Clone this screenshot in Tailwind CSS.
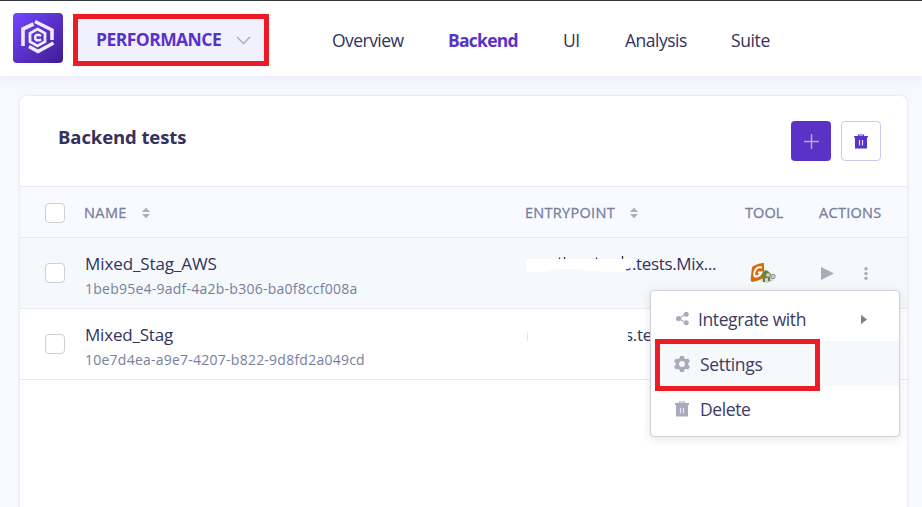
<!DOCTYPE html>
<html lang="en">
<head>
<meta charset="utf-8">
<title>Backend tests</title>
<script src="https://cdn.jsdelivr.net/npm/@tailwindcss/browser@4"></script>
</head>
<body class="h-[507px] w-[922px] overflow-hidden bg-[#f8f9ff] font-['Open_Sans','Noto_Sans',sans-serif] whitespace-nowrap text-[#32325d]">
<header class="flex h-[76px] items-start border-t border-[#343a40] bg-white pl-[13px] shadow-[0_2px_12px_rgba(80,80,200,0.10)]">
  <svg class="mt-3 h-[50px] w-[50px] shrink-0" viewBox="0 0 50 50">
    <defs><linearGradient id="lg" x1="0" y1="0" x2="1" y2="1"><stop offset="0" stop-color="#7546ff"/><stop offset="1" stop-color="#3e1c91"/></linearGradient></defs>
    <rect width="50" height="50" rx="4" fill="url(#lg)"/>
    <g fill="none" stroke="#f0ecff" stroke-width="3.600">
      <path d="M10 33V16L20.500 11"/><path d="M22 8.500L39 17V27"/><path d="M40.500 30L25 38.500L16 33.500"/>
      <path stroke-width="2.800" d="M24.500 16L32 20.300V28.700L24.500 33L17 28.700V20.300Z"/>
      <path stroke-width="2.500" d="M28 23L26.500 22H23.500L22.300 23.200V26L23.500 27.200H26.500L28 26.200"/>
    </g>
  </svg>
  <button class="mt-[13px] ml-[10px] flex h-[52px] w-[196px] shrink-0 items-center border-[5px] border-[#ed1c24] bg-[#f1f0ff] pl-[18px] text-[17.5px] font-bold text-[#5932c8]">
    <span class="-mt-px w-[140px] text-left tracking-[-0.55px]">PERFORMANCE</span>
    <svg class="h-[9px] w-[15px]" viewBox="0 0 15 9" fill="none" stroke="#a9a8bb" stroke-width="1.3"><path d="M1 1L7.500 7.500L14 1"/></svg>
  </button>
  <nav class="mt-[25px] ml-[63px] flex text-[17.500px] leading-7">
    <a class="w-[116px] tracking-[-0.55px]">Overview</a>
    <a class="w-[115px] font-bold tracking-[-0.75px] text-[#5932c8]">Backend</a>
    <a class="w-[62px] tracking-[-0.4px]">UI</a>
    <a class="w-[106px] tracking-[-0.5px]">Analysis</a>
    <a class="tracking-[-0.4px]">Suite</a>
  </nav>
</header>

<main class="mt-5 ml-5 h-[420px] w-[887px] rounded-t-md bg-white shadow-[0_0_3px_rgba(50,50,120,0.16)]">
  <div class="flex h-[90px] items-start justify-between pt-[25px] pr-[26px] pl-[38px]">
    <h1 class="mt-[2px] text-[18.500px] leading-7 font-bold tracking-[-0.1px]">Backend tests</h1>
    <div class="flex gap-[10px]">
      <button class="flex size-10 items-center justify-center rounded bg-[#5932c8]">
        <svg class="size-[15px]" viewBox="0 0 15 15" stroke="#b4adcf" stroke-width="1.500"><path d="M7.500 0V15M0 7.500H15"/></svg>
      </button>
      <button class="flex size-10 items-center justify-center rounded border border-[#d0c6f0]">
        <svg class="h-[15px] w-[14px]" viewBox="0 0 14 15" fill="none"><path d="M4.500 2.500V1H9.500V2.500" stroke="#5932c8" stroke-width="1.200"/><path d="M0 2H14V3.500H0ZM1 3H13V14.500H1Z" fill="#5932c8"/><path d="M5.500 6V11.500M8.500 6V11.500" stroke="#e4dff6" stroke-width="1.200"/></svg>
      </button>
    </div>
  </div>

  <div class="grid h-[52px] grid-cols-[64px_441px_220px_74px_1fr] items-center border-y border-[#e7eaf0] bg-[#f9faff] pt-px text-[14.500px] font-medium text-[#77809d] [-webkit-text-stroke:0.3px_#77809d]">
    <span class="ml-[25px] size-5 rounded border border-[#cbd1d6] bg-white"></span>
    <span class="flex items-center tracking-[0.4px]"><span class="w-[58px]">NAME</span>
      <svg class="h-3 w-[8px]" viewBox="0 0 9 12" fill="#a9afb5"><path d="M0 5L4.500 0L9 5ZM0 7H9L4.500 12Z"/></svg></span>
    <span class="flex items-center tracking-[0.3px]"><span class="w-[105px]">ENTRYPOINT</span>
      <svg class="h-3 w-[8px]" viewBox="0 0 9 12" fill="#a9afb5"><path d="M0 5L4.500 0L9 5ZM0 7H9L4.500 12Z"/></svg></span>
    <span class="tracking-[0.1px]">TOOL</span>
    <span class="tracking-[0.3px]">ACTIONS</span>
  </div>

  <div class="grid h-[71px] grid-cols-[65px_440px_224px_70px_1fr] border-b border-[#e7eaf0] bg-[#f5f9fc]">
    <span class="mt-[25px] ml-[25px] size-5 rounded border border-[#cbd1d6] bg-white"></span>
    <div class="pt-[14px]">
      <p class="text-[17px] leading-6 tracking-[-0.1px]">Mixed_Stag_AWS</p>
      <p class="mt-[2px] text-[14px] leading-[22px] tracking-[0.24px] text-[#77809d]">1beb95e4-9adf-4a2b-b306-ba0f8ccf008a</p>
    </div>
    <div class="relative pt-[14px] pl-[107px] text-[17px] leading-6 tracking-[-0.35px]">.tests.Mix...
      <svg class="absolute top-[18px] left-0 h-5 w-[110px]" viewBox="0 0 110 20"><path d="M1 3H107V6L100 16H85L65 15L52 13H32L20 16H1Z" fill="#fff"/><path d="M34.500 1.500V3M39.500 1V3M71.500 1.500V3M97.500 0V3" stroke="#32325d" stroke-width="1.300"/><path d="M101 13.500Q103 14.500 105.500 12.500" fill="none" stroke="#32325d" stroke-width="1.300"/></svg>
    </div>
    <svg class="mt-[24px] ml-[1px] h-[23px] w-[27px]" viewBox="0 0 27 23">
      <ellipse cx="17" cy="18" rx="6" ry="3" fill="#d2d5d5"/>
      <path d="M2 5Q8 1 14 1V16Q8 19 2 20Q0 19 1 14Z" fill="#d66c08"/>
      <path d="M12 5.500Q8 4.500 6 7Q3 12 5 14.500Q9 15 11.500 10.500H8" fill="none" stroke="#fff" stroke-width="2"/>
      <path d="M12 12L15 8L18 9L21 12L20 16L16 16L13 18Z" fill="#69883f"/>
      <path d="M14 11H19M14 17V20M19 16V19" stroke="#5f7d42" stroke-width="2"/><circle cx="18" cy="13" r="2" fill="#c6cdbd"/><circle cx="23" cy="14.500" r="2.200" fill="#cdd2cf" stroke="#828c85"/>
    </svg>
    <div class="flex h-[70px] items-center pl-[2px]">
      <svg class="h-[13px] w-[13px]" viewBox="0 0 13 13" fill="#a8abb9"><path d="M0 0L13 6.500L0 13Z"/></svg>
      <svg class="ml-[30px] h-[13px] w-[4px]" viewBox="0 0 4 13" fill="#a8abb9"><circle cx="2" cy="1.800" r="1.700"/><circle cx="2" cy="6.500" r="1.700"/><circle cx="2" cy="11.200" r="1.700"/></svg>
    </div>
  </div>

  <div class="grid h-[71px] grid-cols-[65px_440px_1fr] border-b border-[#e7eaf0]">
    <span class="mt-[25px] ml-[25px] size-5 rounded border border-[#cbd1d6] bg-white"></span>
    <div class="pt-[14px]">
      <p class="text-[17px] leading-6 tracking-[-0.2px]">Mixed_Stag</p>
      <p class="mt-[2px] text-[14px] leading-[22px] tracking-[0.24px] text-[#77809d]">10e7d4ea-a9e7-4207-b822-9d8fd2a049cd</p>
    </div>
    <div class="flex pt-[14px] text-[17px] leading-6 tracking-[-0.3px]">
      <span class="mt-[9px] ml-[2px] h-[9px] w-px bg-[#ffe2bd]"></span>
      <span class="ml-[100px] flex w-6 justify-end overflow-hidden"><span>s.te</span></span>
    </div>
  </div>
</main>

<div class="absolute top-[290px] left-[650px] h-[147px] w-[250px] rounded border border-[#cfd1d7] bg-white py-[5px] text-[17.500px] tracking-[-0.4px] text-[#3d3b64] shadow-[0_2px_10px_rgba(50,50,93,0.12)]">
  <div class="flex h-[45px] items-center pl-[25px]">
    <svg class="h-[15px] w-[13px]" viewBox="0 0 14 15" fill="#a8abb9"><path d="M3 7.500L11 2.500M3 7.500L11 12.500" stroke="#a8abb9" stroke-width="1.200"/><circle cx="2.800" cy="7.500" r="2.800"/><circle cx="11" cy="2.800" r="2.700"/><circle cx="11" cy="12.200" r="2.700"/></svg>
    <span class="mt-[2px] ml-[9px] w-[163px]">Integrate with</span>
    <svg class="mt-px h-[11px] w-[6px]" viewBox="0 0 7 11" fill="#77809d"><path d="M0 0L7 5.500L0 11Z"/></svg>
  </div>
  <div class="flex h-[45px] items-center bg-[#f5f9fc] pl-[23px]">
    <svg class="h-4 w-4" viewBox="0 0 16 16"><path fill="#a8abb9" fill-rule="evenodd" d="M6 0H10L10.400 2.300L12 3.200L14.200 2.400L16 5.600L14.200 7V9L16 10.400L14.200 13.600L12 12.800L10.400 13.700L10 16H6L5.600 13.700L4 12.800L1.800 13.600L0 10.400L1.800 9V7L0 5.600L1.800 2.400L4 3.200L5.600 2.300ZM8 5A3 3 0 1 0 8 11A3 3 0 1 0 8 5Z"/></svg>
    <span class="mt-[2px] ml-[10px] tracking-[-0.3px]">Settings</span>
  </div>
  <div class="flex h-[45px] items-center pl-[24px]">
    <svg class="h-4 w-[14px]" viewBox="0 0 14 16" fill="none"><path d="M4.500 2.500V1H9.500V2.500" stroke="#a8abb9" stroke-width="1.200"/><path d="M0 2H14V4H0ZM1 4H13V15.500H1Z" fill="#a8abb9"/><path d="M5.500 7V12.500M8.500 7V12.500" stroke="#e8e9ee" stroke-width="1.200"/></svg>
    <span class="mt-[2px] ml-[11px]">Delete</span>
  </div>
</div>
<div class="absolute top-[339px] left-[655px] h-[52px] w-[165px] border-[5px] border-[#ed1c24]"></div>
</body>
</html>
